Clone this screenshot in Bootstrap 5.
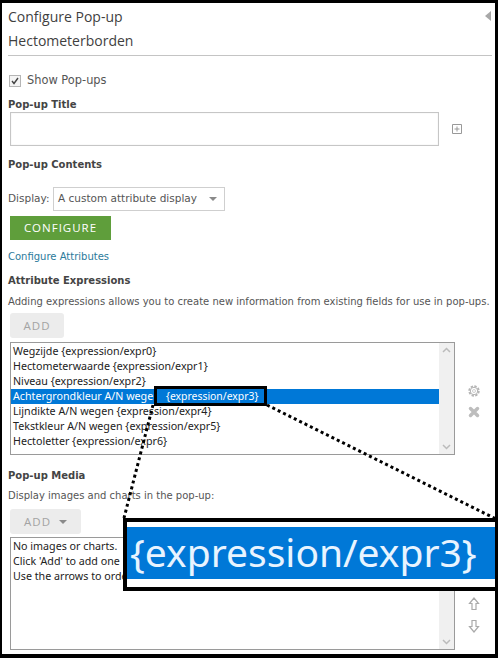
<!DOCTYPE html>
<html lang="en">
<head>
  <meta charset="UTF-8" />
  <meta name="viewport" content="width=device-width, initial-scale=1" />
  <title>Configure Pop-up</title>
  <link href="https://cdn.jsdelivr.net/npm/bootstrap@5.3.3/dist/css/bootstrap.min.css" rel="stylesheet">
  <style>
    body {
      font-family: "DejaVu Sans", sans-serif;
      font-size: 10px;
      color: #555;
      background: #fff;
    }
    .frame {
      position: relative;
      width: 498px;
      height: 658px;
      border: solid #000;
      border-width: 3px 3px 4px 2px;
      padding: 0 3px 0 6px;
      overflow: hidden;
    }
    .panel-title {
      font-family: "Open Sans", sans-serif;
      font-size: 14px;
      line-height: 20px;
      color: #3f3f3f;
      margin: 0;
    }
    .title-second { margin-top: 4px; }
    .collapse-arrow {
      position: absolute;
      top: 8px;
      right: 4px;
      width: 0;
      height: 0;
      border: solid transparent;
      border-width: 5px 6px 5px 0;
      border-right-color: #a8a8a8;
    }
    .panel-rule {
      height: 1px;
      background: #c4c4c4;
      margin: 4px 0 0;
    }
    .show-row {
      margin-top: 18px;
      height: 14px;
      gap: 6px;
      font-size: 11.4px;
    }
    .fake-check {
      width: 12px;
      height: 12px;
      margin-left: 1px;
      border: 1px solid #b5b5b5;
      background: #f4f4f4;
    }
    .sec-head {
      font-weight: 700;
      font-size: 10px;
      line-height: 14px;
      color: #444;
    }
    .head-title { margin-top: 10px; }
    .head-contents { margin-top: 12px; }
    .head-attr { margin-top: 10px; }
    .head-media { margin-top: 14px; }
    .title-row { margin-top: 0; }
    .title-input.form-control {
      width: 429px;
      height: 34px;
      margin-left: 2px;
      border: 1px solid #c6c6c6;
      border-radius: 0;
      box-shadow: inset 0 0 1px #ccc;
    }
    .plus-box { margin-left: 13px; }
    .display-row { margin-top: 15px; }
    .display-label { width: 41px; font-size: 10.5px; }
    .fake-select {
      width: 172px;
      height: 24px;
      border: 1px solid #cfcfcf;
      padding-left: 4px;
      font-size: 10.5px;
      color: #555;
      white-space: nowrap;
    }
    .fake-select .caret-down { margin-left: auto; margin-right: 7px; }
    .caret-down {
      width: 0;
      height: 0;
      border: solid transparent;
      border-width: 4px 4px 0;
      border-top-color: #8a8a8a;
    }
    .btn.btn-configure {
      --bs-btn-padding-y: 0;
      --bs-btn-padding-x: 0;
      width: 101px;
      height: 24px;
      margin: 5px 0 0 2px;
      border: 0;
      border-radius: 0;
      background: #5f9e3b;
      color: #fff;
      font-family: "Open Sans", sans-serif;
      font-size: 11.5px;
      font-weight: 500;
      letter-spacing: 1px;
    }
    .link-row { margin-top: 9px; }
    .attr-link { color: #2b7a9b; text-decoration: none; line-height: 14px; }
    .helper-line { line-height: 14px; white-space: nowrap; }
    .helper-attr { margin-top: 7px; font-size: 10px; }
    .helper-media { margin-top: 6px; }
    .btn.btn-grey {
      --bs-btn-padding-y: 0;
      --bs-btn-padding-x: 0;
      height: 25px;
      margin-left: 2px;
      border: 0;
      border-radius: 3px;
      background: #ececec;
      color: #a3a3a3;
      font-family: "Open Sans", sans-serif;
      font-size: 11.5px;
      font-weight: 500;
      letter-spacing: 1px;
    }
    .btn-add-plain { width: 54px; margin-top: 4px; }
    .btn-add-menu { width: 71px; margin-top: 6px; }
    .list-row { margin-top: 4px; }
    .media-row { margin-top: 3px; }
    .list-wrap {
      width: 445px;
      height: 113px;
      margin-left: 2px;
      border: 1px solid #9a9a9a;
      font-family: "Noto Sans", sans-serif;
      font-size: 10.7px;
      color: #222;
    }
    .list-rows { padding-top: 1px; min-width: 0; }
    .list-rows div {
      height: 15px;
      line-height: 15px;
      padding-left: 2px;
      white-space: nowrap;
    }
    .list-rows .picked { background: #0078d7; color: #fff; }
    .fake-scroll {
      width: 15px;
      background: #f0f0f0;
      padding: 4px 0;
    }
    .side-tools { width: 37px; }
    .tools-top { padding-top: 4px; }
    .tools-bottom { padding-bottom: 17px; }
    .callout {
      position: absolute;
      border: solid #000;
      background: #fff;
    }
    .callout-small {
      left: 152px;
      top: 383px;
      width: 113px;
      height: 20px;
      border-width: 3px;
      background: #0078d7;
      color: #fff;
      font-family: "Noto Sans", sans-serif;
      font-size: 10.4px;
      line-height: 14px;
      padding-left: 9px;
      white-space: nowrap;
    }
    .callout-big {
      left: 121px;
      top: 515px;
      width: 375px;
      height: 73px;
      border-width: 4px 0 4px 4px;
      padding: 5px 0 8px;
    }
    .callout-band {
      height: 100%;
      background: #0078d7;
      color: #e8f4ff;
      font-family: "Noto Sans", sans-serif;
      font-size: 39px;
      line-height: 50px;
      padding-left: 3px;
      white-space: nowrap;
    }
    .leader-lines {
      position: absolute;
      left: -2px;
      top: -3px;
      width: 498px;
      height: 658px;
      pointer-events: none;
    }
  </style>
</head>
<body>
  <div class="frame">
    <h1 class="panel-title mt-1">Configure Pop-up</h1>
    <span class="collapse-arrow"></span>
    <h2 class="panel-title title-second">Hectometerborden</h2>
    <div class="panel-rule"></div>

    <div class="show-row d-flex align-items-center">
      <span class="fake-check d-flex align-items-center justify-content-center">
        <svg width="8" height="8" viewBox="0 0 8 8"><path d="M1 4l2 2.5L7 1" fill="none" stroke="#444" stroke-width="1.4"/></svg>
      </span>
      <span>Show Pop-ups</span>
    </div>

    <div class="sec-head head-title">Pop-up Title</div>
    <div class="title-row d-flex align-items-center">
      <input type="text" class="form-control title-input">
      <svg class="plus-box" width="10" height="10" viewBox="0 0 10 10"><path d="M.5.5h9v9h-9zM5 2.5v5M2.5 5h5" fill="none" stroke="#999"/></svg>
    </div>

    <div class="sec-head head-contents">Pop-up Contents</div>
    <div class="display-row d-flex align-items-center gap-1">
      <span class="display-label">Display:</span>
      <div class="fake-select d-flex align-items-center">A custom attribute display<span class="caret-down"></span></div>
    </div>
    <button type="button" class="btn btn-configure d-block">CONFIGURE</button>

    <div class="link-row"><a href="#" class="attr-link">Configure Attributes</a></div>
    <div class="sec-head head-attr">Attribute Expressions</div>
    <div class="helper-line helper-attr">Adding expressions allows you to create new information from existing fields for use in pop-ups.</div>
    <button type="button" class="btn btn-grey btn-add-plain d-block">ADD</button>

    <div class="list-row d-flex align-items-center">
      <div class="list-wrap d-flex">
        <div class="list-rows flex-grow-1">
          <div>Wegzijde {expression/expr0}</div>
          <div>Hectometerwaarde {expression/expr1}</div>
          <div>Niveau {expression/expr2}</div>
          <div class="picked">Achtergrondkleur A/N wegen</div>
          <div>Lijndikte A/N wegen {expression/expr4}</div>
          <div>Tekstkleur A/N wegen {expression/expr5}</div>
          <div>Hectoletter {expression/expr6}</div>
        </div>
        <div class="fake-scroll d-flex flex-column justify-content-between align-items-center">
          <svg width="9" height="6" viewBox="0 0 9 6"><path d="M1 5l3.5-3.5L8 5" fill="none" stroke="#bbb" stroke-width="1.5"/></svg>
          <svg width="9" height="6" viewBox="0 0 9 6"><path d="M1 1l3.5 3.5L8 1" fill="none" stroke="#bbb" stroke-width="1.5"/></svg>
        </div>
      </div>
      <div class="side-tools tools-top d-flex flex-column align-items-center gap-2">
        <svg width="14" height="14" viewBox="0 0 14 14"><circle cx="7" cy="7" r="4.5" fill="none" stroke="#b5b5b5" stroke-width="2.4" stroke-dasharray="2.2 1.3"/><circle cx="7" cy="7" r="3.7" fill="#fff" stroke="#b5b5b5"/><circle cx="7" cy="7" r="1.5" fill="#fff" stroke="#d0d0d0"/></svg>
        <svg width="12" height="12" viewBox="0 0 12 12"><path d="M2.5 2.5l7 7M9.5 2.5l-7 7" stroke="#bdbdbd" stroke-width="3.5" stroke-linecap="round"/></svg>
      </div>
    </div>

    <div class="sec-head head-media">Pop-up Media</div>
    <div class="helper-line helper-media">Display images and charts in the pop-up:</div>
    <button type="button" class="btn btn-grey btn-add-menu d-flex align-items-center justify-content-center gap-2">ADD <span class="caret-down"></span></button>

    <div class="media-row d-flex">
      <div class="list-wrap d-flex">
        <div class="list-rows flex-grow-1">
          <div>No images or charts.</div>
          <div>Click 'Add' to add one</div>
          <div>Use the arrows to order</div>
        </div>
        <div class="fake-scroll d-flex flex-column justify-content-end align-items-center">
          <svg width="9" height="6" viewBox="0 0 9 6"><path d="M1 1l3.5 3.5L8 1" fill="none" stroke="#bbb" stroke-width="1.5"/></svg>
        </div>
      </div>
      <div class="side-tools tools-bottom d-flex flex-column align-items-center justify-content-end gap-2">
        <svg width="12" height="14" viewBox="0 0 12 14"><path d="M6 1L1.5 6.5H4v6h4v-6h2.5z" fill="#fff" stroke="#aaa" stroke-width="1.2"/></svg>
        <svg width="12" height="14" viewBox="0 0 12 14"><path d="M6 13L1.5 7.5H4v-6h4v6h2.5z" fill="#fff" stroke="#aaa" stroke-width="1.2"/></svg>
      </div>
    </div>

    <svg class="leader-lines" viewBox="0 0 498 658">
      <path d="M153 405L124 518M267 405L496 519" fill="none" stroke="#000" stroke-width="3" stroke-dasharray="3 3"/>
    </svg>
    <div class="callout callout-small">{expression/expr3}</div>
    <div class="callout callout-big"><div class="callout-band">{expression/expr3}</div></div>
  </div>
  <script src="https://cdn.jsdelivr.net/npm/bootstrap@5.3.3/dist/js/bootstrap.bundle.min.js"></script>
</body>
</html>
